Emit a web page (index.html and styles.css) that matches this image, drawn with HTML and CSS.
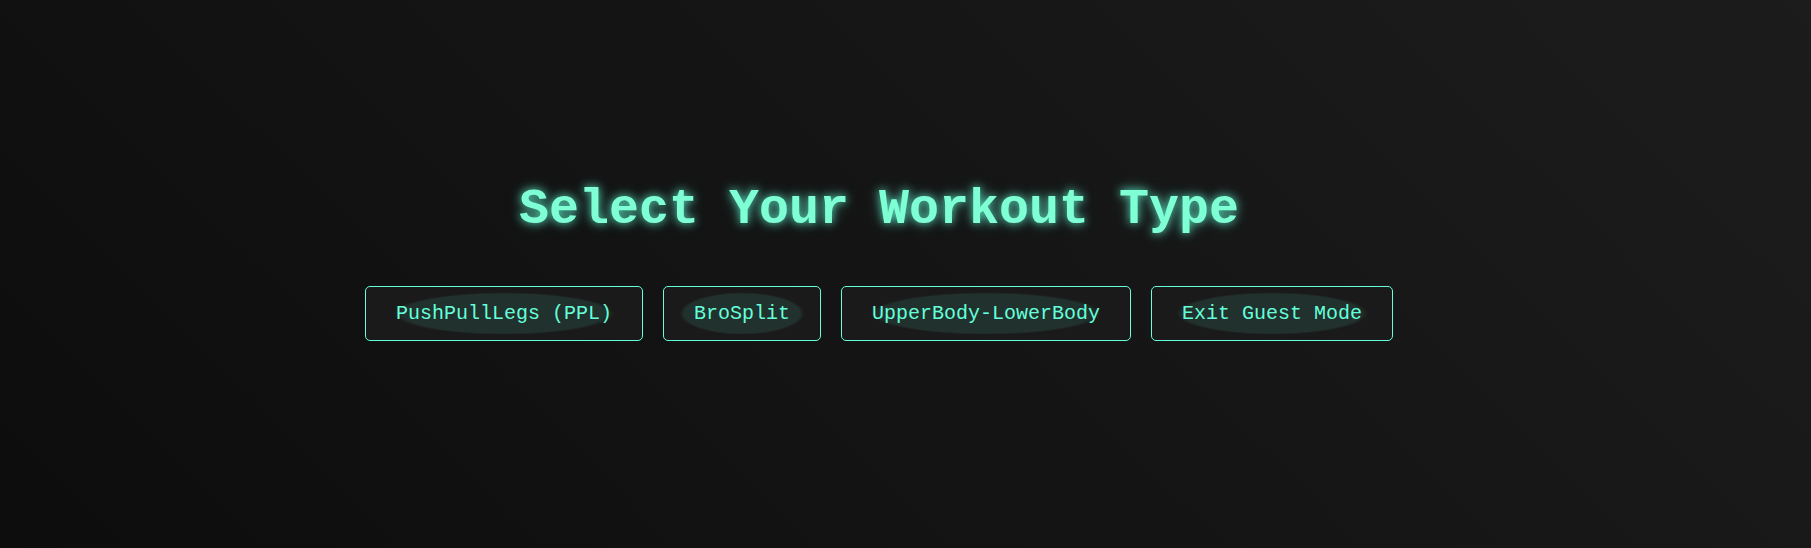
FILE: index.html
```html
<!DOCTYPE html>
<html lang="en">
<head>
<meta charset="utf-8">
<title>Select Your Workout Type</title>
<link rel="stylesheet" href="styles.css">
</head>
<body>
<main class="screen">
  <h1 class="title">Select Your Workout Type</h1>
  <div class="options">
    <button class="option">PushPullLegs (PPL)</button>
    <button class="option">BroSplit</button>
    <button class="option">UpperBody-LowerBody</button>
    <button class="option">Exit Guest Mode</button>
  </div>
</main>
</body>
</html>
```

FILE: styles.css
```css
html, body {
  margin: 0;
  padding: 0;
  height: 100%;
}

body {
  background: linear-gradient(45deg, #0d0d0d 0%, #1c1c1c 100%);
  font-family: Courier, "Nimbus Mono PS", "Nimbus Mono L", FreeMono, "Liberation Mono", monospace;
  color: #64ffda;
}

.screen {
  box-sizing: border-box;
  min-height: 100vh;
  display: flex;
  flex-direction: column;
  align-items: center;
  justify-content: center;
  padding: 0 53px 26px 0;
}

.title {
  margin: 0 0 48px 0;
  font-size: 50px;
  font-weight: bold;
  line-height: normal;
  color: #7fffd4;
  text-shadow: 0 0 8px rgba(100, 255, 218, 0.8), 0 0 16px rgba(100, 255, 218, 0.35);
}

.options {
  display: flex;
  gap: 20px;
}

.option {
  font-family: Courier, "Nimbus Mono PS", "Nimbus Mono L", FreeMono, "Liberation Mono", monospace;
  font-size: 20px;
  line-height: normal;
  color: #64ffda;
  padding: 15px 30px;
  border: 1px solid #64ffda;
  border-radius: 5px;
  background-color: #1a1a1a;
  background-image: radial-gradient(ellipse closest-side at center, rgba(100, 255, 218, 0.1) 0%, rgba(100, 255, 218, 0.1) 74%, rgba(100, 255, 218, 0) 80%);
  cursor: pointer;
}
```
